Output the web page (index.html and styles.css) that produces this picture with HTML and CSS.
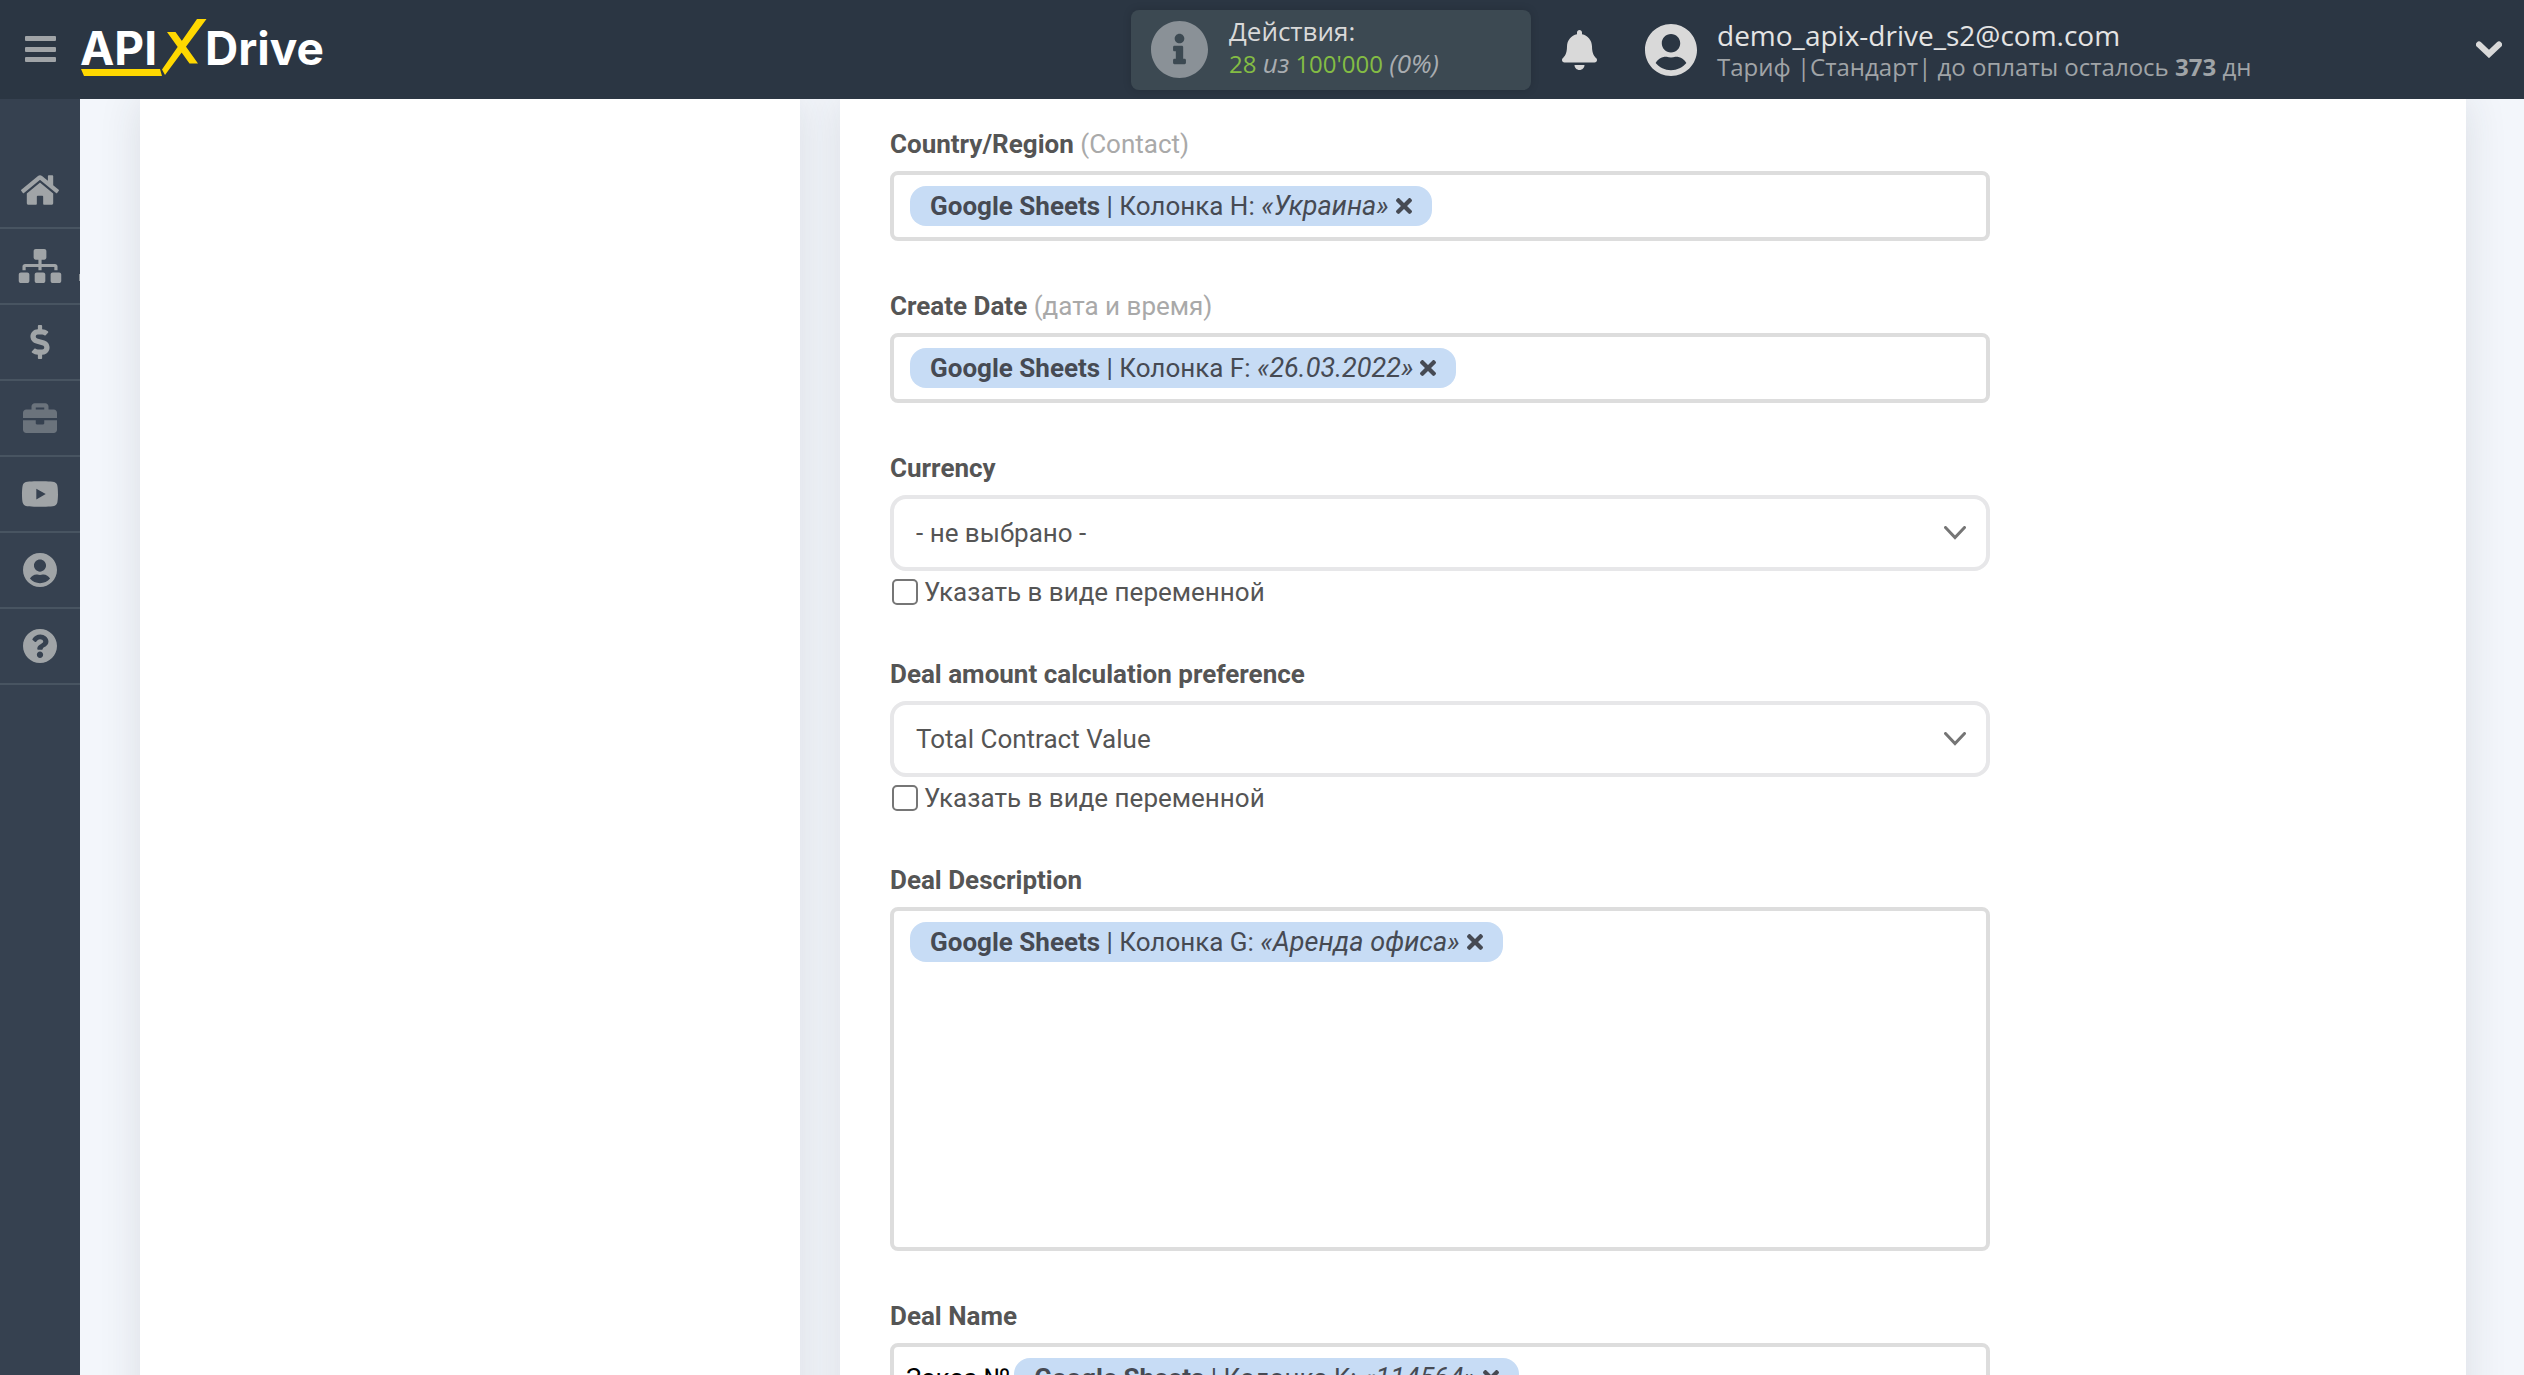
FILE: index.html
```html
<!DOCTYPE html>
<html lang="ru">
<head>
<meta charset="utf-8">
<meta name="viewport" content="width=device-width, initial-scale=1">
<title>ApiX-Drive</title>
<link rel="stylesheet" href="styles.css">
</head>
<body>
<svg class="sprite" aria-hidden="true">
  <symbol id="i-times" viewBox="0 80 352 352"><path d="M242.720 256l100.070-100.070c12.280-12.280 12.280-32.190 0-44.480l-22.240-22.240c-12.280-12.280-32.190-12.280-44.480 0L176 189.280 75.930 89.210c-12.280-12.280-32.190-12.280-44.480 0L9.210 111.450c-12.280 12.280-12.280 32.190 0 44.480L109.280 256 9.210 356.070c-12.280 12.280-12.280 32.190 0 44.480l22.240 22.240c12.280 12.280 32.200 12.280 44.480 0L176 322.720l100.070 100.070c12.280 12.280 32.200 12.280 44.480 0l22.240-22.240c12.280-12.280 12.280-32.190 0-44.480L242.720 256z"/></symbol>
  <symbol id="i-user" viewBox="0 8 496 496"><path d="M248 8C111 8 0 119 0 256s111 248 248 248 248-111 248-248S385 8 248 8zm0 96c48.600 0 88 39.400 88 88s-39.400 88-88 88-88-39.400-88-88 39.400-88 88-88zm0 344c-58.700 0-111.300-26.600-146.500-68.200 18.800-35.400 55.600-59.800 98.500-59.800 2.400 0 4.800.4 7.100 1.100 13 4.200 26.600 6.900 40.900 6.900 14.300 0 28-2.700 40.900-6.900 2.300-.7 4.700-1.100 7.100-1.100 42.900 0 79.700 24.400 98.500 59.800C359.300 421.400 306.700 448 248 448z"/></symbol>
</svg>

<header class="topbar">
  <button class="icon-button menu-toggle" type="button" aria-label="Меню">
    <svg width="31" height="26" viewBox="0 0 31 26"><path d="M1 0h29a1 1 0 0 1 1 1v3a1 1 0 0 1-1 1H1a1 1 0 0 1-1-1V1a1 1 0 0 1 1-1zM1 11h29a1 1 0 0 1 1 1v3a1 1 0 0 1-1 1H1a1 1 0 0 1-1-1v-3a1 1 0 0 1 1-1zM1 21h29a1 1 0 0 1 1 1v3a1 1 0 0 1-1 1H1a1 1 0 0 1-1-1v-3a1 1 0 0 1 1-1z"/></svg>
  </button>
  <a class="logo" href="#" aria-label="APIXDrive">
    <svg class="logo-mark" width="127" height="57" viewBox="0 0 127 57"><path d="M1 50h79l2 7H4zM117 0h9.500L85 56l-3-5.500zM87 13h8.500l22.500 31.500h-8.500z"/></svg>
    <span class="logo-api">API</span><span class="logo-drive">Drive</span>
  </a>
  <section class="usage">
    <svg class="usage-icon" width="57" height="57" viewBox="8 8 496 496"><path d="M256 8C119.043 8 8 119.083 8 256c0 136.997 111.043 248 248 248s248-111.003 248-248C504 119.083 392.957 8 256 8zm0 110c23.196 0 42 18.804 42 42s-18.804 42-42 42-42-18.804-42-42 18.804-42 42-42zm56 254c0 6.627-5.373 12-12 12h-88c-6.627 0-12-5.373-12-12v-24c0-6.627 5.373-12 12-12h12v-64h-12c-6.627 0-12-5.373-12-12v-24c0-6.627 5.373-12 12-12h64c6.627 0 12 5.373 12 12v100h12c6.627 0 12 5.373 12 12v24z"/></svg>
    <div class="usage-text">
      <div class="usage-title">Действия:</div>
      <div class="usage-count"><b>28</b> <i>из</i> <b>100'000</b> <i>(0%)</i></div>
    </div>
  </section>
  <button class="icon-button bell" type="button" aria-label="Уведомления">
    <svg width="35" height="40" viewBox="0 0 448 512"><path d="M224 512c35.320 0 63.970-28.650 63.970-64H160.030c0 35.350 28.650 64 63.970 64zm215.390-149.710c-19.320-20.760-55.470-51.990-55.470-154.290 0-77.700-54.480-139.900-127.940-155.160V32c0-17.670-14.320-32-31.980-32s-31.980 14.330-31.980 32v20.840C118.560 68.100 64.080 130.300 64.080 208c0 102.300-36.150 133.530-55.470 154.290-6 6.450-8.660 14.160-8.610 21.710.11 16.400 12.980 32 32.100 32h383.800c19.120 0 32-15.600 32.100-32 .05-7.550-2.610-15.270-8.610-21.710z"/></svg>
  </button>
  <button class="account" type="button">
    <svg class="account-icon" width="52" height="52"><use href="#i-user"/></svg>
    <span class="account-text">
      <span class="account-mail">demo_apix-drive_s2@com.com</span>
      <span class="account-plan">Тариф |Стандарт| до оплаты осталось <b>373</b> дн</span>
    </span>
    <svg class="account-caret" width="26" height="17" viewBox="0 0 26 17"><path d="M3 3.500l10 9.500 10-9.500"/></svg>
  </button>
</header>

<div class="shell">
  <nav class="sidebar" aria-label="Основное меню">
    <a class="nav-item" href="#" aria-label="Главная"><svg width="38" height="34" viewBox="0 0 576 512"><path d="M488 312.700V456c0 13.300-10.700 24-24 24H348c-6.600 0-12-5.400-12-12V356c0-6.600-5.400-12-12-12h-72c-6.600 0-12 5.400-12 12v112c0 6.600-5.400 12-12 12H112c-13.300 0-24-10.700-24-24V312.700c0-3.600 1.600-7 4.400-9.300l188-154.800c4.400-3.600 10.800-3.600 15.300 0l188 154.800c2.700 2.300 4.300 5.700 4.300 9.300zm83.600-60.900L488 182.900V44.400c0-6.600-5.400-12-12-12h-56c-6.600 0-12 5.400-12 12V117l-89.500-73.700c-17.700-14.600-43.300-14.600-61 0L4.400 251.800c-5.100 4.200-5.800 11.800-1.600 16.900l25.500 31c4.200 5.100 11.800 5.800 16.900 1.600l235.200-193.700c4.400-3.600 10.800-3.600 15.300 0l235.200 193.700c5.100 4.200 12.700 3.500 16.900-1.600l25.500-31c4.200-5.200 3.400-12.700-1.700-16.900z"/></svg></a>
    <a class="nav-item has-submenu" href="#" aria-label="Связи"><svg width="44" height="34" viewBox="0 0 640 512"><path d="M128 352H32c-17.670 0-32 14.330-32 32v96c0 17.670 14.330 32 32 32h96c17.670 0 32-14.330 32-32v-96c0-17.670-14.330-32-32-32zm-24-80h192v48h48v-48h192v48h48v-57.590c0-21.170-17.230-38.410-38.410-38.410H344v-64h40c17.670 0 32-14.330 32-32V32c0-17.670-14.330-32-32-32H256c-17.670 0-32 14.330-32 32v96c0 17.670 14.330 32 32 32h40v64H94.410C73.230 224 56 241.230 56 262.410V320h48v-48zm264 80h-96c-17.670 0-32 14.330-32 32v96c0 17.670 14.330 32 32 32h96c17.670 0 32-14.330 32-32v-96c0-17.670-14.330-32-32-32zm240 0h-96c-17.670 0-32 14.330-32 32v96c0 17.670 14.330 32 32 32h96c17.670 0 32-14.330 32-32v-96c0-17.670-14.330-32-32-32z"/></svg></a>
    <a class="nav-item" href="#" aria-label="Оплата"><svg width="20" height="34" viewBox="0 0 288 512"><path d="M209.200 233.400l-108-31.600C88.700 198.200 80 186.500 80 173.500c0-16.300 13.200-29.500 29.500-29.500h66.300c12.200 0 24.200 3.700 34.200 10.500 6.100 4.100 14.300 3.100 19.500-2l34.800-34c7.100-6.900 6.100-18.400-1.800-24.500C238 74.800 207.400 64.100 176 64V16c0-8.800-7.200-16-16-16h-32c-8.800 0-16 7.200-16 16v48h-2.500C45.800 64-5.400 118.700.5 183.600c4.200 46.100 39.400 83.600 83.800 96.600l102.500 30c12.500 3.700 21.200 15.300 21.200 28.300 0 16.300-13.200 29.500-29.500 29.500h-66.300C100 368 88 364.300 78 357.500c-6.100-4.100-14.300-3.100-19.500 2l-34.800 34c-7.100 6.900-6.100 18.400 1.800 24.500 24.500 19.200 55.100 29.900 86.500 30v48c0 8.800 7.200 16 16 16h32c8.800 0 16-7.200 16-16v-48.200c46.600-.9 90.300-28.600 105.700-72.700 21.500-61.600-14.600-124.800-72.500-141.700z"/></svg></a>
    <a class="nav-item is-dim" href="#" aria-label="Услуги"><svg width="34" height="34" viewBox="0 0 512 512"><path d="M320 336c0 8.840-7.160 16-16 16h-96c-8.840 0-16-7.160-16-16v-48H0v144c0 25.600 22.400 48 48 48h416c25.600 0 48-22.400 48-48V288H320v48zm144-208h-80V80c0-25.600-22.400-48-48-48H176c-25.600 0-48 22.400-48 48v48H48c-25.600 0-48 22.400-48 48v80h512v-80c0-25.600-22.400-48-48-48zm-144 0H192V96h128v32z"/></svg></a>
    <a class="nav-item" href="#" aria-label="Видео"><svg width="38" height="34" viewBox="0 0 576 512"><path d="M549.655 124.083c-6.281-23.650-24.787-42.276-48.284-48.597C458.781 64 288 64 288 64S117.220 64 74.629 75.486c-23.497 6.322-42.003 24.947-48.284 48.597-11.412 42.867-11.412 132.305-11.412 132.305s0 89.438 11.412 132.305c6.281 23.650 24.787 41.500 48.284 47.821C117.220 448 288 448 288 448s170.780 0 213.371-11.486c23.497-6.321 42.003-24.171 48.284-47.821 11.412-42.867 11.412-132.305 11.412-132.305s0-89.438-11.412-132.305zm-317.510 213.508V175.185l142.739 81.205-142.739 81.201z"/></svg></a>
    <a class="nav-item" href="#" aria-label="Профиль"><svg width="34" height="34"><use href="#i-user"/></svg></a>
    <a class="nav-item" href="#" aria-label="Помощь"><svg width="34" height="34" viewBox="8 8 496 496"><path d="M504 256c0 136.997-111.043 248-248 248S8 392.997 8 256C8 119.083 119.043 8 256 8s248 111.083 248 248zM262.655 90c-54.497 0-89.255 22.957-116.549 63.758-3.536 5.286-2.353 12.415 2.715 16.258l34.699 26.310c5.205 3.947 12.621 3.008 16.665-2.122 17.864-22.658 30.113-35.797 57.303-35.797 20.429 0 45.698 13.148 45.698 32.958 0 14.976-12.363 22.667-32.534 33.976C247.128 238.528 216 254.941 216 296v4c0 6.627 5.373 12 12 12h56c6.627 0 12-5.373 12-12v-1.333c0-28.462 83.186-29.647 83.186-106.667 0-58.002-60.165-102-116.531-102zM256 338c-25.365 0-46 20.635-46 46 0 25.364 20.635 46 46 46s46-20.636 46-46c0-25.365-20.635-46-46-46z"/></svg></a>
  </nav>

  <main class="content">
    <aside class="panel"></aside>
    <form class="panel form">
      <div class="field">
        <label class="field-label" for="country">Country/Region <span class="hint">(Contact)</span></label>
        <div class="token-box">
          <span class="chip"><span><b>Google Sheets</b> | Колонка H: <i>«Украина»</i></span><button class="chip-remove" type="button" aria-label="Удалить"><svg width="16" height="16"><use href="#i-times"/></svg></button></span>
          <input class="token-input" id="country" type="text">
        </div>
      </div>

      <div class="field">
        <label class="field-label" for="created">Create Date <span class="hint">(дата и время)</span></label>
        <div class="token-box">
          <span class="chip"><span><b>Google Sheets</b> | Колонка F: <i>«26.03.2022»</i></span><button class="chip-remove" type="button" aria-label="Удалить"><svg width="16" height="16"><use href="#i-times"/></svg></button></span>
          <input class="token-input" id="created" type="text">
        </div>
      </div>

      <div class="field">
        <label class="field-label" for="currency">Currency</label>
        <div class="select-box">
          <select class="select" id="currency"><option>- не выбрано -</option></select>
          <svg class="select-caret" width="22" height="14" viewBox="0 0 22 14"><path d="M1.500 1.500L11 11.500l9.500-10"/></svg>
        </div>
        <label class="check"><input class="check-box" type="checkbox">Указать в виде переменной</label>
      </div>

      <div class="field">
        <label class="field-label" for="amount">Deal amount calculation preference</label>
        <div class="select-box">
          <select class="select" id="amount"><option>Total Contract Value</option></select>
          <svg class="select-caret" width="22" height="14" viewBox="0 0 22 14"><path d="M1.500 1.500L11 11.500l9.500-10"/></svg>
        </div>
        <label class="check"><input class="check-box" type="checkbox">Указать в виде переменной</label>
      </div>

      <div class="field">
        <label class="field-label" for="description">Deal Description</label>
        <div class="token-box token-box-tall">
          <span class="chip"><span><b>Google Sheets</b> | Колонка G: <i>«Аренда офиса»</i></span><button class="chip-remove" type="button" aria-label="Удалить"><svg width="16" height="16"><use href="#i-times"/></svg></button></span>
          <textarea class="token-input" id="description"></textarea>
        </div>
      </div>

      <div class="field">
        <label class="field-label" for="name">Deal Name</label>
        <div class="token-box">
          <input class="token-prefix" id="name" type="text" value="Заказ №">
          <span class="chip"><span><b>Google Sheets</b> | Колонка K: <i>«114564»</i></span><button class="chip-remove" type="button" aria-label="Удалить"><svg width="16" height="16"><use href="#i-times"/></svg></button></span>
        </div>
      </div>
    </form>
  </main>
</div>
</body>
</html>
```

FILE: styles.css
```css
*,
*::before,
*::after {
  box-sizing: border-box;
}

body {
  margin: 0;
  height: 100vh;
  display: flex;
  flex-direction: column;
  overflow: hidden;
  background: #f3f6fb;
  color: #555;
  font-family: Roboto, "Liberation Sans", sans-serif;
  font-size: 26px;
  line-height: 30px;
}

button,
input,
select,
textarea {
  font: inherit;
  color: inherit;
  margin: 0;
  padding: 0;
  border: 0;
  background: none;
  outline: none;
}

button {
  cursor: pointer;
}

svg {
  display: block;
  flex: none;
  fill: currentColor;
}

.sprite {
  display: none;
}

/* Top bar */

.topbar {
  flex: none;
  height: 99px;
  display: flex;
  align-items: center;
  background: #2b3643;
  color: #d9d9d9;
  font-family: "Open Sans", "Noto Sans", sans-serif;
}

.icon-button {
  display: grid;
  place-items: center;
}

.menu-toggle {
  width: 80px;
  height: 80px;
  padding-bottom: 2px;
  color: #a0a4a7;
}

.logo {
  position: relative;
  margin-bottom: 4px;
  display: flex;
  gap: 48px;
  align-items: center;
  color: #fff;
  font-family: Inter, "Open Sans", sans-serif;
  font-size: 46px;
  font-weight: 700;
  line-height: 50px;
  text-decoration: none;
}

.logo-mark {
  position: absolute;
  left: 0;
  top: -4px;
  fill: #ffd800;
}

.usage {
  width: 400px;
  height: 80px;
  margin-left: auto;
  padding: 0 20px;
  display: flex;
  align-items: center;
  gap: 21px;
  border-radius: 8px;
  background: #3c4952;
  box-shadow: 0 0 8px rgba(0, 0, 0, 0.15);
}

.usage-icon {
  color: #8a9197;
}

.usage-text {
  padding-bottom: 6px;
}

.usage-title {
  font-size: 26px;
  line-height: 34px;
}

.usage-count {
  font-size: 24px;
  line-height: 30px;
  color: #a9adb1;
}

.usage-count i {
  font-size: 26px;
}

.usage-count b {
  font-weight: 400;
  color: #84bd44;
}

.bell {
  width: 96px;
  height: 80px;
}

.account {
  width: 897px;
  padding-left: 18px;
  padding-right: 22px;
  display: flex;
  align-items: center;
  gap: 20px;
  text-align: left;
}

.account-text {
  display: flex;
  flex-direction: column;
}

.account-mail {
  font-size: 28px;
  line-height: 34px;
  color: #e4e4e4;
}

.account-plan {
  font-size: 24px;
  line-height: 30px;
  color: #a0a4a7;
}

.account-caret {
  margin-left: auto;
  fill: none;
  stroke: currentColor;
  stroke-width: 6;
  stroke-linecap: round;
}

/* Page body */

.shell {
  flex: 1;
  min-height: 0;
  display: flex;
}

.sidebar {
  flex: none;
  width: 80px;
  padding-top: 54px;
  background: #364150;
}

.nav-item {
  position: relative;
  height: 76px;
  display: grid;
  place-items: center;
  border-bottom: 2px solid #485461;
  color: #a0a4a7;
}

.nav-item.is-dim {
  color: #6b737c;
}

.has-submenu::after {
  content: "";
  position: absolute;
  right: 0;
  top: 45px;
  width: 1px;
  height: 7px;
  background: #8b9298;
}

.content {
  flex: 1;
  min-width: 0;
  padding: 0 58px 0 60px;
  display: grid;
  grid-template-columns: 660px 1fr;
  gap: 40px;
  overflow: hidden;
}

.panel {
  background: #fff;
  box-shadow: 0 0 40px rgba(40, 50, 60, 0.12);
}

/* Form */

.form {
  padding: 30px 50px;
  display: flex;
  flex-direction: column;
  gap: 50px;
}

.field {
  width: 100%;
  max-width: 1100px;
  display: flex;
  flex-direction: column;
}

.field-label {
  margin-bottom: 12px;
  font-weight: 700;
}

.hint {
  font-weight: 400;
  color: #a9a9a9;
}

.token-box {
  min-height: 70px;
  padding: 11px 12px;
  display: flex;
  align-items: flex-start;
  border: 4px solid #ddd;
  border-radius: 8px;
}

.token-box-tall {
  min-height: 344px;
  align-items: stretch;
}

.token-input {
  flex: 1;
  min-width: 0;
  height: 40px;
  resize: none;
}

.token-box-tall .token-input {
  height: auto;
}

.token-prefix {
  field-sizing: content;
  height: 40px;
  color: #000;
}

.chip {
  flex: none;
  height: 40px;
  margin: 0 4px;
  padding: 0 20px;
  display: flex;
  align-items: center;
  gap: 7px;
  border-radius: 16px;
  background: #c7dcf5;
  color: #464a53;
}

.chip i {
  font-size: 27px;
}

.chip-remove {
  display: block;
}

.select-box {
  display: grid;
  align-items: center;
}

.select {
  grid-area: 1 / 1;
  width: 100%;
  height: 76px;
  padding: 0 60px 0 22px;
  appearance: none;
  border: 4px solid #e7e7e9;
  border-radius: 16px;
}

.select-caret {
  grid-area: 1 / 1;
  justify-self: end;
  margin-right: 24px;
  fill: none;
  stroke: #757575;
  stroke-width: 3;
  stroke-linecap: round;
  pointer-events: none;
}

.check {
  height: 34px;
  margin-top: 4px;
  padding-left: 2px;
  display: flex;
  align-items: center;
  gap: 6px;
}

.check-box {
  appearance: none;
  width: 26px;
  height: 26px;
  border: 2px solid #767676;
  border-radius: 5px;
}

.check-box:checked {
  background: #2b6fd6;
}
```
